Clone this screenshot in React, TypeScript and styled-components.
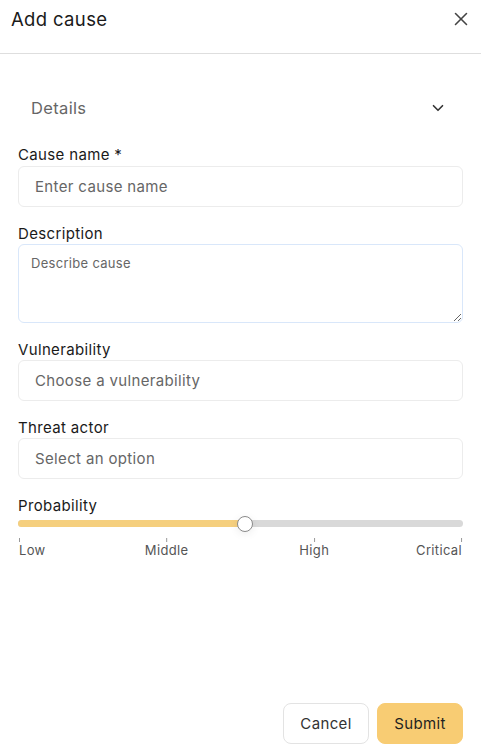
import { useState } from "react";
import { styled, createGlobalStyle } from "styled-components";
import { X, ChevronDown } from "lucide-react";

const GlobalStyle = createGlobalStyle`
  * { box-sizing: border-box; }
  html, body { margin: 0; padding: 0; background: #fff; }
  body {
    font-family: Inter, "Noto Sans", sans-serif;
    color: #1a1a1a;
    letter-spacing: 0.35px;
  }
`;

const marks = [
  { label: "Low", pct: 0, align: "start" },
  { label: "Middle", pct: 33.33, align: "center" },
  { label: "High", pct: 66.66, align: "center" },
  { label: "Critical", pct: 100, align: "end" },
];

export default function App() {
  const [value] = useState(51);

  return (
    <>
      <GlobalStyle />
      <Page>
        <Header>
          <Title>Add cause</Title>
          <CloseButton aria-label="Close">
            <X size={22} strokeWidth={1.7} />
          </CloseButton>
        </Header>

        <Body>
          <SectionToggle>
            <span>Details</span>
            <ChevronDown size={18} strokeWidth={2.2} />
          </SectionToggle>

          <Field $first>
            <Label>Cause name *</Label>
            <Input type="text" placeholder="Enter cause name" />
          </Field>

          <Field>
            <Label>Description</Label>
            <TextArea placeholder="Describe cause" />
          </Field>

          <Field>
            <Label>Vulnerability</Label>
            <Select>Choose a vulnerability</Select>
          </Field>

          <Field>
            <Label>Threat actor</Label>
            <Select>Select an option</Select>
          </Field>

          <Field>
            <Label>Probability</Label>
            <Track>
              <Fill style={{ width: `${value}%` }} />
              <Thumb style={{ left: `${value}%` }} />
            </Track>
            <Scale>
              {marks.map((m) => (
                <Mark key={m.label} $align={m.align} style={{ left: `${m.pct}%` }}>
                  <Tick />
                  <MarkLabel>{m.label}</MarkLabel>
                </Mark>
              ))}
            </Scale>
          </Field>
        </Body>

        <Footer>
          <Button>Cancel</Button>
          <Button $primary>Submit</Button>
        </Footer>
      </Page>
    </>
  );
}

const Page = styled.div`
  display: flex;
  flex-direction: column;
  min-height: 100vh;
`;

const Header = styled.div`
  display: flex;
  justify-content: space-between;
  align-items: flex-start;
  height: 54px;
  padding: 7px 9px 0 11px;
  border-bottom: 1px solid #dedede;
`;

const Title = styled.h1`
  margin: 0;
  font-size: 18.5px;
  font-weight: 400;
  line-height: 24px;
  color: #1a1a1a;
`;

const CloseButton = styled.button`
  display: flex;
  border: none;
  background: none;
  padding: 0;
  margin-top: 1px;
  color: #444;
  cursor: pointer;
`;

const Body = styled.div`
  display: flex;
  flex-direction: column;
  padding: 0 18px;
`;

const SectionToggle = styled.div`
  display: flex;
  justify-content: space-between;
  align-items: center;
  margin-top: 36px;
  height: 36px;
  padding: 0 16px 0 13px;
  font-size: 16.5px;
  color: #666;
  svg { color: #333; }
`;

const Field = styled.div<{ $first?: boolean }>`
  display: flex;
  flex-direction: column;
  margin-top: ${(p) => (p.$first ? "19px" : "17px")};
`;

const Label = styled.label`
  font-size: 15px;
  line-height: 20px;
  color: #1a1a1a;
`;

const Input = styled.input`
  height: 41px;
  margin-top: 1px;
  border: 1px solid #ececec;
  border-radius: 6px;
  padding: 0 16px;
  font: inherit;
  font-size: 15px;
  letter-spacing: 0.35px;
  color: #1a1a1a;
  outline: none;
  &::placeholder { color: #666; }
`;

const TextArea = styled.textarea`
  display: block;
  height: 79px;
  border: 1px solid #d9e7fa;
  border-radius: 6px;
  padding: 10px 12px;
  font: inherit;
  font-size: 13px;
  letter-spacing: 0.3px;
  outline: none;
  resize: vertical;
  &::placeholder { color: #666; }
`;

const Select = styled.div`
  display: flex;
  align-items: center;
  height: 41px;
  border: 1px solid #ececec;
  border-radius: 6px;
  padding: 0 16px;
  font-size: 15px;
  color: #666;
`;

const Track = styled.div`
  position: relative;
  height: 7px;
  margin-top: 4px;
  border-radius: 4px;
  background: #d9d9d9;
`;

const Fill = styled.div`
  height: 100%;
  border-radius: 4px;
  background: #f5cf7e;
`;

const Thumb = styled.div`
  position: absolute;
  top: 50%;
  width: 16px;
  height: 16px;
  border-radius: 50%;
  background: #fff;
  border: 1px solid #8a8a8a;
  transform: translate(-50%, -50%);
  box-shadow: 0 2px 8px rgba(0, 0, 0, 0.08);
`;

const Scale = styled.div`
  position: relative;
  height: 30px;
  margin: 0 1px;
`;

const Mark = styled.div<{ $align: string }>`
  position: absolute;
  top: 0;
  display: flex;
  flex-direction: column;
  align-items: ${(p) =>
    p.$align === "start" ? "flex-start" : p.$align === "end" ? "flex-end" : "center"};
  transform: ${(p) =>
    p.$align === "start" ? "none" : p.$align === "end" ? "translateX(-100%)" : "translateX(-50%)"};
`;

const Tick = styled.div`
  width: 1px;
  height: 4px;
  margin-top: 11px;
  background: #999;
`;

const MarkLabel = styled.span`
  font-size: 13px;
  line-height: 16px;
  margin-top: 0;
  color: #555;
  white-space: nowrap;
`;

const Footer = styled.div`
  display: flex;
  justify-content: flex-end;
  gap: 8px;
  margin-top: auto;
  padding: 0 18px 12px;
`;

const Button = styled.button<{ $primary?: boolean }>`
  height: 41px;
  min-width: 86px;
  padding: 0 16px;
  border-radius: 8px;
  border: 1px solid ${(p) => (p.$primary ? "#f8cc73" : "#e3e3e3")};
  background: ${(p) => (p.$primary ? "#f8cc73" : "#fff")};
  color: ${(p) => (p.$primary ? "#1f1f1f" : "#333")};
  font: inherit;
  font-size: 15px;
  letter-spacing: 0.35px;
  cursor: pointer;
`;
